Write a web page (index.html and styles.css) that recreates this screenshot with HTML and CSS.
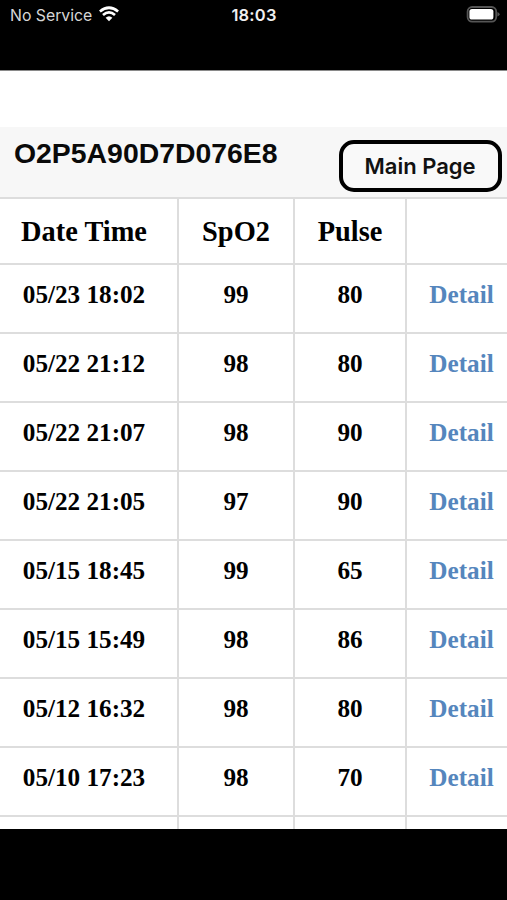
FILE: index.html
```
<!DOCTYPE html>
<html>
<head>
    <meta http-equiv="Content-Type" content="text/html; charset=utf-8">
    <title>Records</title>
    <link rel="stylesheet" href="styles.css">
</head>
<body>
    <div class="phone">
        <!-- status bar -->
        <div class="status">
            <div class="carrier">
                <span>No Service</span>
                <svg class="wifi" width="20" height="16" viewBox="0 0 20 16" fill="none" stroke="#fff" stroke-width="2.7">
                    <path d="M.9 5.5Q10-2 19.1 5.5"/>
                    <path d="M4 9.1Q10 3.8 16 9.1"/>
                    <path d="M6.6 11.7Q10 8.6 13.4 11.7L10 15.3Z" fill="#fff" stroke="none"/>
                </svg>
            </div>
            <div class="clock">18:03</div>
            <svg class="battery" width="34" height="17" viewBox="0 0 34 17">
                <rect x="1.6" y="1" width="28.6" height="14.6" rx="4.5" fill="#000" stroke="#555" stroke-width="1.8"/>
                <rect x="3.4" y="3" width="24" height="10.6" rx="2.6" fill="#fff"/>
                <path d="M31.4 6v4.6q2.2-.9 2.2-2.3T31.4 6z" fill="#555"/>
            </svg>
        </div>

        <div class="page">
            <div class="title_bar">
                <h1>O2P5A90D7D076E8</h1>
                <button class="main_btn">Main Page</button>
            </div>
            <table class="list">
                <colgroup><col class="c_date"><col class="c_spo"><col class="c_pulse"><col class="c_link"></colgroup>
                <tr><th>Date Time</th><th>SpO2</th><th>Pulse</th><th></th></tr>
                <tr><td>05/23 18:02</td><td>99</td><td>80</td><td><a href="#">Detail</a></td></tr>
                <tr><td>05/22 21:12</td><td>98</td><td>80</td><td><a href="#">Detail</a></td></tr>
                <tr><td>05/22 21:07</td><td>98</td><td>90</td><td><a href="#">Detail</a></td></tr>
                <tr><td>05/22 21:05</td><td>97</td><td>90</td><td><a href="#">Detail</a></td></tr>
                <tr><td>05/15 18:45</td><td>99</td><td>65</td><td><a href="#">Detail</a></td></tr>
                <tr><td>05/15 15:49</td><td>98</td><td>86</td><td><a href="#">Detail</a></td></tr>
                <tr><td>05/12 16:32</td><td>98</td><td>80</td><td><a href="#">Detail</a></td></tr>
                <tr><td>05/10 17:23</td><td>98</td><td>70</td><td><a href="#">Detail</a></td></tr>
                <tr><td></td><td></td><td></td><td></td></tr>
            </table>
        </div>
    </div>
</body>
</html>
```

FILE: styles.css
```
body,h1,table,th,td,button{margin:0;padding:0;border:0;}
a{text-decoration:none;}

body{ background: #000; overflow: hidden;}
.phone{ width: 507px; height: 900px; overflow: hidden; background: #000;}

.status{ height: 70px; box-sizing: border-box; padding: 5px 7px 0 10px; display: grid; grid-template-columns: 1fr auto 1fr; align-items: start; color: #fff; font-family: Inter, "Liberation Sans", sans-serif;}
.carrier{ display: flex; gap: 7px; font-size: 15.8px; line-height: 21px; color: #d6d6d6;}
.wifi{ margin-top: 1px;}
.clock{ margin-right: 2px; font-size: 16.5px; line-height: 20px; font-weight: 600; color: #f0f0f0; letter-spacing: 0.2px;}
.battery{ justify-self: end; margin-top: 1px;}

.page{ height: 759px; box-sizing: border-box; border-top: 1px solid #8a8a8a; padding-top: 56px; overflow: hidden; background: #fff;}
.title_bar{ height: 70px; box-sizing: border-box; padding: 10px 5px 0 14px; display: flex; justify-content: space-between; align-items: flex-start; background: #f7f7f7;}
.title_bar h1{ font: bold 28.4px/32px "Liberation Sans", sans-serif; color: #0a0a0a;}
.main_btn{ width: 163px; height: 52px; margin-top: 3px; padding-right: 1px; border: 4px solid #000; border-radius: 15px; background: #f9f9f9; color: #111; font: 600 22px/26px Inter, "Liberation Sans", sans-serif;}

.list{ width: 518px; table-layout: fixed; border-collapse: separate; border-spacing: 0; border-top: 2px solid #ddd; font-family: "Liberation Serif", serif; font-weight: bold; color: #000;}
.c_date{ width: 179px;}
.c_spo{ width: 116px;}
.c_pulse{ width: 112px;}
.c_link{ width: 111px;}
.list th,.list td{ box-sizing: border-box; border-right: 2px solid #ddd; border-bottom: 2px solid #ddd; text-align: center; vertical-align: top;}
.list th{ height: 66px; padding-top: 17px; font-size: 28.4px; line-height: 32px;}
.list td{ height: 69px; padding-top: 16px; font-size: 25.2px; line-height: 28px;}
.list td:first-child,.list th:first-child{ padding-right: 9px;}
.list a{ color: #5586bd;}
```
